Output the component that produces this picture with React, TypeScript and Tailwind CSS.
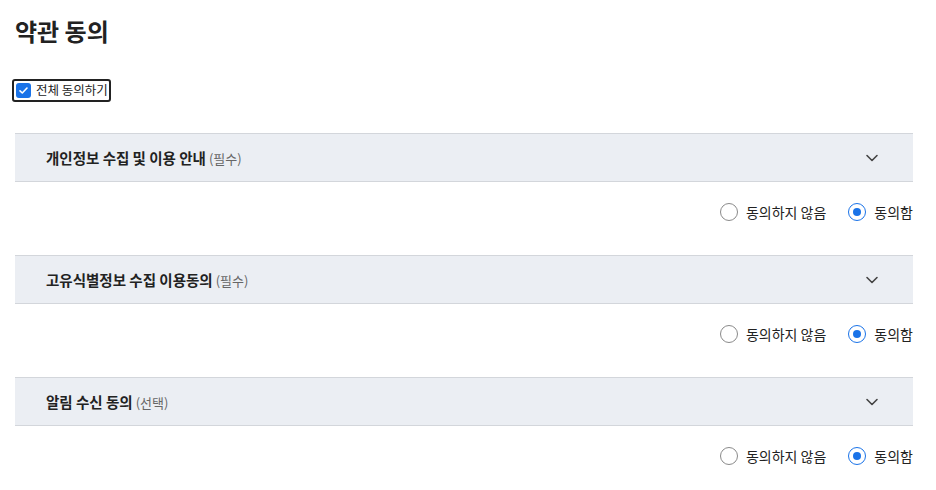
import { useState } from 'react'

const sections = [
  { title: '개인정보 수집 및 이용 안내', tag: '(필수)' },
  { title: '고유식별정보 수집 이용동의', tag: '(필수)' },
  { title: '알림 수신 동의', tag: '(선택)' },
]

function Chevron() {
  return (
    <svg width="14" height="14" viewBox="0 0 14 14" fill="none">
      <path d="M2 4.5l5 5 5-5" stroke="#444" strokeWidth="1.6" strokeLinecap="round" strokeLinejoin="round" />
    </svg>
  )
}

function Radio({ checked }: { checked: boolean }) {
  return (
    <span
      className={`w-[18px] h-[18px] rounded-full border flex items-center justify-center bg-white ${
        checked ? 'border-[#1a73e8] border-[1.5px]' : 'border-[#8a8a8a]'
      }`}
    >
      {checked && <span className="w-[8px] h-[8px] rounded-full bg-[#1a73e8]" />}
    </span>
  )
}

export default function App() {
  const [answers, setAnswers] = useState<boolean[]>([true, true, true])

  return (
    <div
      className="px-[15px] pt-[14px] w-[928px] text-[#222]"
      style={{ fontFamily: '"Noto Sans CJK KR", "Noto Sans", sans-serif' }}
    >
      <h1 className="text-[24px] font-bold leading-[33px]">약관 동의</h1>

      <div className="mt-[32px] flex">
        <label className="-ml-[3px] flex items-center gap-[5px] border-2 border-[#222] rounded-[3px] h-[23px] pl-[2px] pr-[1px]">
          <span className="w-[15px] h-[15px] rounded-[3px] bg-[#1a73e8] flex items-center justify-center">
            <svg width="11" height="11" viewBox="0 0 11 11" fill="none">
              <path d="M2 5.8l2.3 2.2L9 3" stroke="white" strokeWidth="1.6" strokeLinecap="round" strokeLinejoin="round" />
            </svg>
          </span>
          <span className="text-[12.5px] leading-none">전체 동의하기</span>
        </label>
      </div>

      <div className="mt-[31px]">
        {sections.map((s, i) => (
          <div key={s.title}>
            <div className="h-[49px] flex items-center justify-between border-y border-[#d3d6db] bg-[#ebeef3] pl-[31px] pr-[34px]">
              <div className="flex items-baseline gap-[3px]">
                <span className="text-[14.5px] font-bold">{s.title}</span>
                <span className="text-[13px] text-[#666]">{s.tag}</span>
              </div>
              <Chevron />
            </div>
            <div className="h-[73px] flex justify-end items-start pt-[21px] gap-[22px] text-[14px]">
              <button
                className="flex items-center gap-[8px]"
                onClick={() => setAnswers(a => a.map((v, j) => (j === i ? false : v)))}
              >
                <Radio checked={!answers[i]} />
                <span className="leading-none">동의하지 않음</span>
              </button>
              <button
                className="flex items-center gap-[8px]"
                onClick={() => setAnswers(a => a.map((v, j) => (j === i ? true : v)))}
              >
                <Radio checked={answers[i]} />
                <span className="leading-none">동의함</span>
              </button>
            </div>
          </div>
        ))}
      </div>
    </div>
  )
}
